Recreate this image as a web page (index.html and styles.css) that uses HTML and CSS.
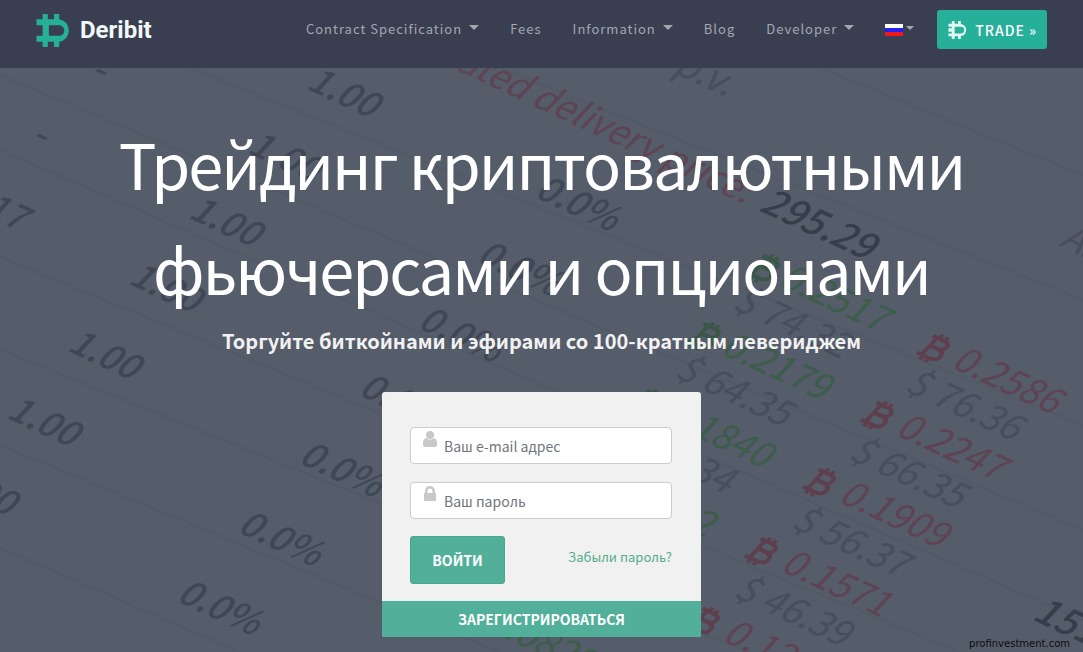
FILE: index.html
```html
<!DOCTYPE html>
<html lang="ru">
<head>
  <meta charset="UTF-8">
  <meta name="viewport" content="width=device-width, initial-scale=1.0">
  <title>Deribit</title>
  <link rel="stylesheet" href="styles.css">
</head>
<body>
  <header class="navbar">
    <a href="#" class="logo">
      <svg class="logo-icon" viewBox="0 0 33 32" aria-hidden="true">
        <path class="mark" d="M0 5H6V0H11V5H17V0H22V5.200A10.900 10.900 0 0 1 22 26.800V32H17V27H11V32H6V27H0V21H6V11H0ZM12 11V21H22A5 5 0 0 0 22 11Z"/>
      </svg>
      <span>Deribit</span>
    </a>
    <nav class="menu">
      <a href="#" class="dropdown">Contract Specification</a>
      <a href="#">Fees</a>
      <a href="#" class="dropdown">Information</a>
      <a href="#">Blog</a>
      <a href="#" class="dropdown">Developer</a>
      <a href="#" class="dropdown lang" aria-label="Русский">
        <svg class="flag" viewBox="0 0 18 12" aria-hidden="true">
          <rect width="18" height="4" fill="#fff"/>
          <rect y="4" width="18" height="4" fill="#2420f0"/>
          <rect y="8" width="18" height="4" fill="#f01818"/>
        </svg>
      </a>
      <a href="#" class="trade">
        <svg class="trade-icon" viewBox="0 0 34 32" aria-hidden="true">
          <path d="M0 5H6V0H11V5H17V0H22V5.200A10.900 10.900 0 0 1 22 26.800V32H17V27H11V32H6V27H0V22H6V19H0V13H6V10H0ZM11 10V22H22A6 6 0 0 0 22 10Z"/>
        </svg>
        <span>TRADE »</span>
      </a>
    </nav>
  </header>

  <main class="hero">
    <!-- slanted option table behind the text -->
    <svg class="board" viewBox="0 68 1083 584" preserveAspectRatio="xMidYMid slice" aria-hidden="true">
      <defs>
        <g id="btc">
          <path d="M2 -3H7V-25H2M7 -25H14Q21 -25 21 -20Q21 -15 14 -15H8M14 -15Q23 -15 23 -9Q23 -3 15 -3H7M9 -30V-25M15 -30V-25M9 -3V2M15 -3V2" fill="none" stroke="currentColor" stroke-width="4"/>
        </g>
      </defs>
      <g class="rules">
        <path d="M0 75L1083 530M190 68L1083 425M500 68L1083 300M0 150L1083 620M0 257L960 652M0 350L750 652M0 445L500 652M0 548L240 652M820 68L1083 175"/>
      </g>
      <g class="dark">
        <text transform="translate(88 77) rotate(25) skewX(-18)">-</text>
        <text transform="translate(29 142) rotate(25) skewX(-18)">-</text>
        <text transform="translate(-18 214) rotate(25) skewX(-18)">17</text>
        <text transform="translate(305 88) rotate(25) skewX(-18)">1.00</text>
        <text transform="translate(246 152) rotate(25) skewX(-18)">1.00</text>
        <text transform="translate(187 217) rotate(25) skewX(-18)">1.00</text>
        <text transform="translate(127 283) rotate(25) skewX(-18)">1.00</text>
        <text transform="translate(66 350) rotate(25) skewX(-18)">1.00</text>
        <text transform="translate(5 417) rotate(25) skewX(-18)">1.00</text>
        <text transform="translate(-58 486) rotate(25) skewX(-18)">1.00</text>
        <text transform="translate(533 196) rotate(25) skewX(-18)">0.0%</text>
        <text transform="translate(475 261) rotate(25) skewX(-18)">0.0%</text>
        <text transform="translate(416 327) rotate(25) skewX(-18)">0.0%</text>
        <text transform="translate(357 394) rotate(25) skewX(-18)">0.0%</text>
        <text transform="translate(297 462) rotate(25) skewX(-18)">0.0%</text>
        <text transform="translate(236 531) rotate(25) skewX(-18)">0.0%</text>
        <text transform="translate(175 600) rotate(25) skewX(-18)">0.0%</text>
        <text class="strong" transform="translate(758 210) rotate(25) skewX(-18)">295.29</text>
        <text class="strong" transform="translate(1031 619) rotate(25) skewX(-18)">151</text>
      </g>
      <g class="grey">
        <text transform="translate(672 72) rotate(25) skewX(-18)">p.v.</text>
        <text transform="translate(1058 245) rotate(25) skewX(-18)">A.</text>
        <text transform="translate(731 308) rotate(25) skewX(-18)">$ 74.32</text>
        <text transform="translate(673 376) rotate(25) skewX(-18)">$ 64.35</text>
        <text transform="translate(615 443) rotate(25) skewX(-18)">$ 54.34</text>
        <text transform="translate(903 390) rotate(25) skewX(-18)">$ 76.36</text>
        <text transform="translate(847 458) rotate(25) skewX(-18)">$ 66.35</text>
        <text transform="translate(790 527) rotate(25) skewX(-18)">$ 56.37</text>
        <text transform="translate(732 596) rotate(25) skewX(-18)">$ 46.39</text>
      </g>
      <g class="red">
        <text class="label" text-anchor="end" transform="translate(744 204) rotate(25) skewX(-18)">estimated delivery price:</text>
        <use href="#btc" transform="translate(913 354) rotate(25) skewX(-18)"/>
        <text transform="translate(950 367) rotate(25) skewX(-18)">0.2586</text>
        <use href="#btc" transform="translate(857 421) rotate(25) skewX(-18)"/>
        <text transform="translate(894 434) rotate(25) skewX(-18)">0.2247</text>
        <use href="#btc" transform="translate(799 488) rotate(25) skewX(-18)"/>
        <text transform="translate(837 501) rotate(25) skewX(-18)">0.1909</text>
        <use href="#btc" transform="translate(741 557) rotate(25) skewX(-18)"/>
        <text transform="translate(779 570) rotate(25) skewX(-18)">0.1571</text>
        <use href="#btc" transform="translate(683 627) rotate(25) skewX(-18)"/>
        <text transform="translate(721 640) rotate(25) skewX(-18)">0.1233</text>
      </g>
      <g class="green">
        <use href="#btc" transform="translate(743 274) rotate(25) skewX(-18)"/>
        <text transform="translate(777 285) rotate(25) skewX(-18)">0.2517</text>
        <use href="#btc" transform="translate(684 342) rotate(25) skewX(-18)"/>
        <text transform="translate(719 353) rotate(25) skewX(-18)">0.2179</text>
        <use href="#btc" transform="translate(627 409) rotate(25) skewX(-18)"/>
        <text transform="translate(661 421) rotate(25) skewX(-18)">0.1840</text>
        <text transform="translate(603 490) rotate(25) skewX(-18)">0.1502</text>
        <text transform="translate(484 628) rotate(25) skewX(-18)">0.0829</text>
      </g>
    </svg>

    <h1>Трейдинг криптовалютными фьючерсами и опционами</h1>
    <p class="subtitle">Торгуйте биткойнами и эфирами со 100-кратным левериджем</p>

    <form class="login">
      <div class="fields">
        <div class="field">
          <svg class="field-icon" viewBox="0 0 14 16" aria-hidden="true">
            <circle cx="7" cy="4" r="4"/>
            <path d="M3 7Q7 10 11 7Q14 8 14 12V13.500Q14 16 12 16H2Q0 16 0 13.500V12Q0 8 3 7Z"/>
          </svg>
          <input type="email" placeholder="Ваш e-mail адрес" aria-label="Ваш e-mail адрес">
        </div>
        <div class="field">
          <svg class="field-icon" viewBox="0 0 14 16" aria-hidden="true">
            <path d="M1 7H2V5A5 5 0 0 1 12 5V7H13V15H1ZM4.500 7H9.500V5A2.500 2.500 0 0 0 4.500 5Z" fill-rule="evenodd"/>
          </svg>
          <input type="password" placeholder="Ваш пароль" aria-label="Ваш пароль">
        </div>
        <div class="actions">
          <button type="button" class="enter">ВОЙТИ</button>
          <a href="#" class="forgot">Забыли пароль?</a>
        </div>
      </div>
      <a href="#" class="register">ЗАРЕГИСТРИРОВАТЬСЯ</a>
    </form>
    <span class="source">profinvestment.com</span>
  </main>
</body>
</html>
```
FILE: styles.css
```css
* {
    box-sizing: border-box;
}
body {
    margin: 0;
    min-height: 100vh;
    display: flex;
    flex-direction: column;
    font-family: "Noto Sans CJK SC", "Noto Sans", sans-serif;
    background-color: #555c6a;
}
a {
    text-decoration: none;
}
.navbar {
    display: flex;
    justify-content: space-between;
    align-items: flex-start;
    height: 68px;
    padding: 10px 36px;
    background-color: #393f50;
}
.logo {
    display: flex;
    align-items: center;
    gap: 9px;
    height: 40px;
    color: #f0f8f8;
    font-family: Roboto, sans-serif;
    font-size: 24px;
    font-weight: 700;
}
.logo-icon {
    width: 35px;
    height: 33px;
}
.mark {
    fill: #26b099;
}
.menu {
    display: flex;
    align-items: center;
    gap: 31px;
    height: 39px;
}
.menu a {
    display: flex;
    align-items: center;
    padding-bottom: 2px;
    color: #a3a7b0;
    font-size: 13px;
    letter-spacing: 1px;
}
.dropdown::after {
    content: "";
    margin-left: 7px;
    margin-bottom: 2px;
    border: 5px solid transparent;
    border-top-color: #a3a7b0;
    border-bottom: 0;
}
.menu .lang {
    padding-bottom: 0;
}
.menu .lang::after {
    margin-left: 3px;
    margin-bottom: 4px;
    border-width: 4px 4px 0;
}
.flag {
    width: 18px;
    height: 12px;
}
.menu .trade {
    gap: 7px;
    height: 39px;
    margin-left: -8px;
    padding: 0 10px 0 11px;
    border-radius: 3px;
    background-color: #26b099;
    color: #fff;
    font-size: 14px;
    font-weight: 500;
}
.trade-icon {
    width: 20px;
    height: 18px;
    fill: #e2f6f2;
}
.hero {
    position: relative;
    flex: 1;
    display: flex;
    flex-direction: column;
    align-items: center;
    padding: 42px 20px 15px;
    overflow: hidden;
}
.board {
    position: absolute;
    top: 0;
    left: 0;
    width: 100%;
    height: 100%;
    font-size: 37px;
}
.board .dark {
    fill: #3f4655;
    font-size: 36px;
    font-weight: 500;
}
.board .grey {
    fill: #474e5c;
}
.board .red {
    fill: #5e4453;
    color: #5d3f4e;
}
.board .green {
    fill: #3d5d4b;
    color: #3a5748;
}
.board .label {
    font-size: 36px;
}
.board .strong {
    font-size: 38px;
    fill: #363d4b;
}
.rules {
    stroke: #525967;
    stroke-width: 2;
}
h1 {
    position: relative;
    max-width: 900px;
    margin: 0 0 5px;
    color: #fff;
    font-size: 63px;
    font-weight: 400;
    line-height: 105px;
    letter-spacing: -2px;
    text-align: center;
}
.subtitle {
    position: relative;
    margin: 0;
    color: #f1f1f1;
    font-size: 20px;
    font-weight: 700;
    line-height: 32px;
    text-align: center;
}
.login {
    position: relative;
    width: 319px;
    margin-top: 35px;
    border-radius: 3px;
    background-color: #f1f1f1;
    overflow: hidden;
}
.fields {
    padding: 35px 29px 17px 28px;
}
.field {
    position: relative;
    margin-bottom: 18px;
}
.field-icon {
    position: absolute;
    top: 4px;
    left: 13px;
    width: 14px;
    height: 16px;
    fill: #c8c8c8;
}
.field input {
    display: block;
    width: 100%;
    height: 37px;
    padding: 0 10px 0 33px;
    border: 1px solid #ccc;
    border-radius: 4px;
    background-color: #fff;
    font-family: inherit;
    font-size: 14px;
}
.field input::placeholder {
    color: #70757c;
}
.actions {
    display: flex;
    justify-content: space-between;
    margin-top: -1px;
}
.enter {
    width: 95px;
    height: 48px;
    border: 1px solid #48a58f;
    border-radius: 3px;
    background-color: #52af9a;
    color: #fff;
    font-family: inherit;
    font-size: 14px;
    font-weight: 700;
}
.forgot {
    margin-top: 11px;
    color: #52ae88;
    font-size: 13px;
    line-height: 20px;
}
.register {
    display: block;
    background-color: #52af9a;
    color: #fff;
    font-size: 14px;
    font-weight: 700;
    line-height: 36px;
    text-align: center;
}
.source {
    position: absolute;
    right: 13px;
    bottom: 3px;
    color: #0c0e12;
    font-family: "DejaVu Sans", sans-serif;
    font-size: 10px;
}
```
